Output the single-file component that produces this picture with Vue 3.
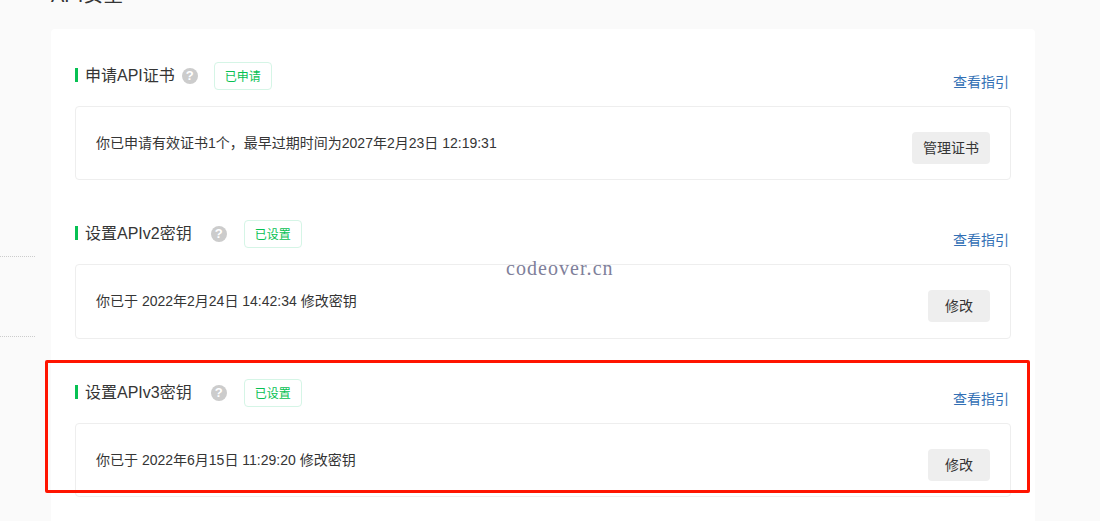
<script setup>
const sections = [
  {
    title: '申请API证书',
    status: '已申请',
    text: '你已申请有效证书1个，最早过期时间为2027年2月23日 12:19:31',
    action: '管理证书',
    wide: false
  },
  {
    title: '设置APIv2密钥',
    status: '已设置',
    text: '你已于 2022年2月24日 14:42:34 修改密钥',
    action: '修改',
    wide: true
  },
  {
    title: '设置APIv3密钥',
    status: '已设置',
    text: '你已于 2022年6月15日 11:29:20 修改密钥',
    action: '修改',
    wide: true
  }
]
</script>

<template>
  <div class="page">
    <aside class="side">
      <div class="side-item"></div>
      <div class="side-item"></div>
    </aside>

    <main class="main">
      <h1 class="page-title">API安全</h1>
      <div class="card">
        <section v-for="s in sections" :key="s.title" class="section">
          <div class="head">
            <div class="head-left">
              <h2 class="title">{{ s.title }}</h2>
              <span class="help" :class="{ wide: s.wide }">?</span>
              <span class="badge">{{ s.status }}</span>
            </div>
            <a class="link">查看指引</a>
          </div>
          <div class="box">
            <p class="text">{{ s.text }}</p>
            <button class="btn">{{ s.action }}</button>
          </div>
        </section>
      </div>
    </main>

    <div class="watermark">codeover.cn</div>
    <div class="highlight"></div>
  </div>
</template>

<style>
html, body {
  margin: 0;
  background: #fafafa;
}
</style>

<style scoped>
.page {
  position: relative;
  display: flex;
  height: 521px;
  overflow: hidden;
  background: #fafafa;
  font-family: "Liberation Sans", "Noto Sans CJK SC", sans-serif;
  color: #353535;
}

/* left nav, only the dotted separators are in view */
.side {
  width: 35px;
  flex-shrink: 0;
  padding-top: 177px;
}

.side-item {
  height: 79px;
  border-bottom: 1px dotted #ccc;
}

.main {
  width: 984px;
  margin-left: 16px;
}

.page-title {
  height: 28px;
  margin: -19px 0 20px;
  font-size: 20px;
  font-weight: 400;
  line-height: 28px;
}

.card {
  height: 600px;
  padding: 33px 24px 0;
  box-sizing: border-box;
  background: #fff;
  border-radius: 4px;
}

.section {
  margin-bottom: 40px;
}

.head {
  display: flex;
  justify-content: space-between;
  height: 28px;
  margin-bottom: 16px;
}

.head-left {
  display: flex;
  align-items: center;
}

.title {
  margin: 0;
  padding-left: 10px;
  position: relative;
  font-size: 16px;
  font-weight: 400;
  line-height: 28px;
}

.title::before {
  content: "";
  position: absolute;
  left: 0;
  top: 6px;
  width: 3px;
  height: 14px;
  background: #07c153;
}

.help {
  width: 16px;
  height: 16px;
  margin: 0 16px 0 7px;
  border-radius: 50%;
  background: #ccc;
  color: #fff;
  font-size: 13px;
  font-weight: 700;
  line-height: 16px;
  text-align: center;
}

.help.wide {
  margin: 0 17px 0 19px;
}

.badge {
  width: 58px;
  height: 28px;
  box-sizing: border-box;
  border: 1px solid #d5f5e6;
  border-radius: 4px;
  color: #07c153;
  font-size: 12px;
  line-height: 28px;
  text-align: center;
}

.link {
  align-self: flex-end;
  margin-right: 2px;
  margin-bottom: -2px;
  color: #3370b5;
  font-size: 14px;
  line-height: 20px;
}

.box {
  display: flex;
  justify-content: space-between;
  align-items: flex-start;
  height: 74.4px;
  box-sizing: border-box;
  padding: 25px 20px 0;
  border: 1px solid #eee;
  border-radius: 4px;
}

.text {
  margin: 0;
  font-size: 14px;
  line-height: 22px;
}

.btn {
  height: 32px;
  min-width: 62px;
  padding: 0 11px 2px;
  border: 0;
  border-radius: 4px;
  background: #eee;
  color: #353535;
  font-family: inherit;
  font-size: 14px;
}

.watermark {
  position: absolute;
  left: 506px;
  top: 256px;
  font-family: "Liberation Serif", serif;
  font-size: 20px;
  letter-spacing: 1.05px;
  line-height: 24px;
  color: #80809a;
}

.highlight {
  position: absolute;
  left: 45px;
  top: 360px;
  width: 985px;
  height: 133px;
  box-sizing: border-box;
  border: 3px solid #ff1400;
  border-radius: 2px;
}
</style>
